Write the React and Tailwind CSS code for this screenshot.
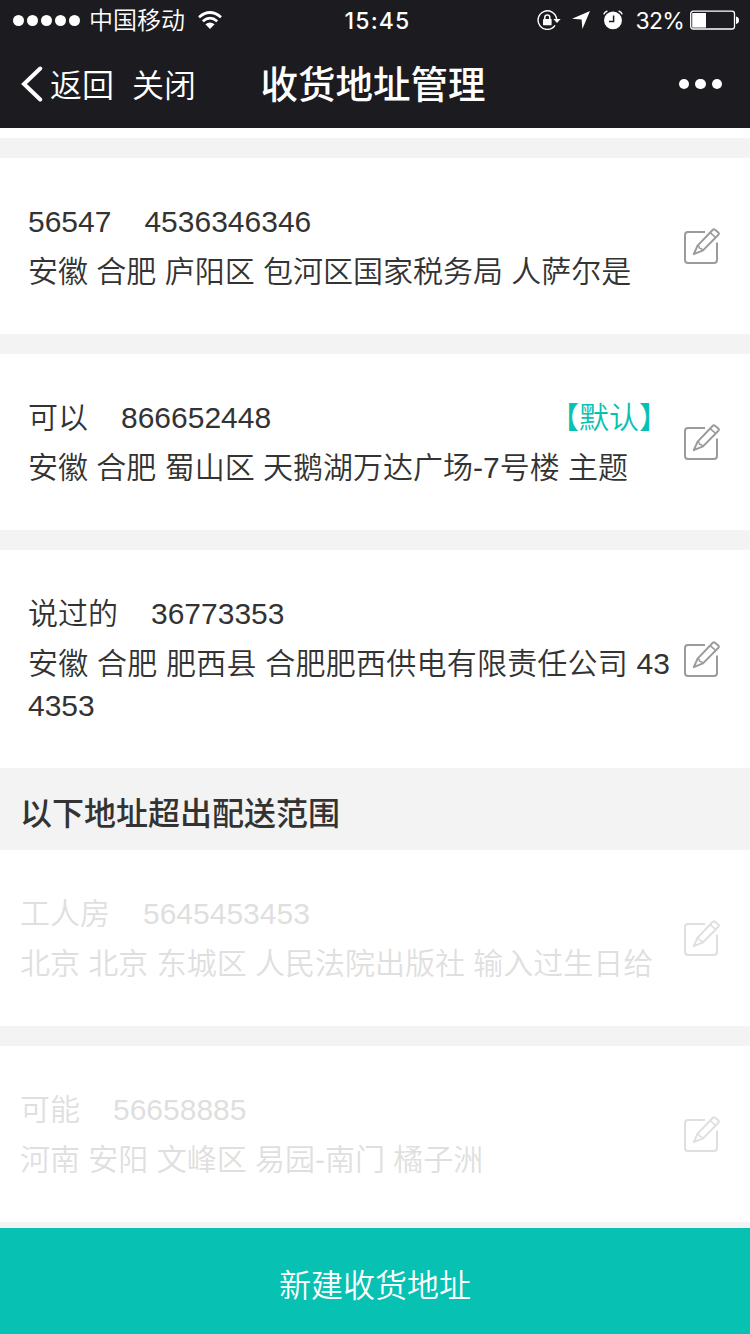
const reachable = [
  { name: '56547', phone: '4536346346', address: '安徽 合肥 庐阳区 包河区国家税务局 人萨尔是' },
  { name: '可以', phone: '866652448', address: '安徽 合肥 蜀山区 天鹅湖万达广场-7号楼 主题', isDefault: true },
  { name: '说过的', phone: '36773353', address: '安徽 合肥 肥西县 合肥肥西供电有限责任公司 434353' },
]

const outOfRange = [
  { name: '工人房', phone: '5645453453', address: '北京 北京 东城区 人民法院出版社 输入过生日给' },
  { name: '可能', phone: '56658885', address: '河南 安阳 文峰区 易园-南门 橘子洲' },
]

function EditIcon({ className }) {
  return (
    <svg
      viewBox="0 0 36 36"
      className={`w-9 h-9 shrink-0 ${className}`}
      fill="none"
      stroke="currentColor"
      strokeWidth="2"
      strokeLinejoin="round"
    >
      <path d="M21 4H4Q1 4 1 7V32Q1 35 4 35H30Q33 35 33 32V14.5" />
      <path d="M9.8 26.2L13.6 17.6L28.8 1.8Q29.8 .8 31 1.7L34.3 4.5Q35.4 5.5 34.4 6.7L19 22.4Z" />
      <path d="M13.6 17.6Q15.2 18 15.6 20.2Q18 20.4 19 22.4M26.2 4.6L31.6 9.4" strokeWidth="1.5" />
    </svg>
  )
}

function StatusBar() {
  return (
    <div className="h-10 flex items-center justify-between pl-[13px] pr-[11px]">
      <div className="flex items-center flex-1">
        <div className="flex gap-[3px] mr-[9px]">
          {[0, 1, 2, 3, 4].map(i => (
            <span key={i} className="w-[11px] h-[11px] rounded-full bg-white" />
          ))}
        </div>
        <span className="pt-[2px] text-[24px] leading-10 font-[350]">中国移动</span>
        <svg viewBox="0 0 24 18" className="w-6 h-[18px] ml-[13px]" fill="none" stroke="white" strokeWidth="2.7">
          <path d="M1 6.2Q12 -3.2 23 6.2" />
          <path d="M4.8 10.2Q12 4 19.2 10.2" />
          <path d="M12 18L7.4 13.3Q12 9.6 16.6 13.3Z" fill="white" stroke="none" />
        </svg>
      </div>
      <span className="pl-[3px] pt-[2px] font-['Inter'] text-[23px] leading-10 font-medium tracking-[1.2px]">15:45</span>
      <div className="flex items-center justify-end flex-1">
        <svg viewBox="0 0 24 20" className="w-6 h-5 mr-[11px]" fill="none" stroke="white" strokeWidth="1.4">
          <path d="M19.6 9A9.3 9.3 0 1 0 18 15.4" />
          <path d="M16.4 9H23.6L20 13Z" fill="white" stroke="none" />
          <rect x="6" y="9" width="8.6" height="6.2" rx=".6" fill="white" stroke="none" />
          <path d="M7.8 9V7.2Q7.8 5 10.3 5Q12.8 5 12.8 7.2V9" strokeWidth="1.5" />
        </svg>
        <svg viewBox="0 0 18 18" className="w-[18px] h-[18px] mr-[13px]" fill="white">
          <path d="M18 0L10.4 18L9.6 8.4L0 7.8Z" />
        </svg>
        <svg viewBox="0 0 20 20" className="w-5 h-5 mr-[13px]" fill="none">
          <circle cx="10" cy="10.4" r="8.9" fill="white" />
          <path d="M10.6 5.6V11.4H6" stroke="#1c1b20" strokeWidth="1.5" />
          <path d="M.8 4.4Q1.6 1.8 4.4 1M19.2 4.4Q18.4 1.8 15.6 1" stroke="white" strokeWidth="1.5" />
        </svg>
        <span className="pt-[2px] font-['Inter'] text-[23px] leading-10 tracking-[-0.8px] mr-[6px]">32%</span>
        <svg viewBox="0 0 49 20" className="w-[49px] h-5" fill="none">
          <rect x=".7" y="1.2" width="43.8" height="17.8" rx="2.5" stroke="white" strokeWidth="1.3" />
          <rect x="2.2" y="3" width="13.8" height="14.6" fill="white" />
          <path d="M46 6.5Q49 7 49 10.2Q49 13.4 46 14Z" fill="white" />
        </svg>
      </div>
    </div>
  )
}

function NavBar() {
  return (
    <div className="h-[88px] flex items-center">
      <div className="flex items-center flex-1 pl-[21px] text-[32px] font-[350]">
        <svg viewBox="0 0 22 36" className="w-[22px] h-9 mr-[7px]" fill="none" stroke="white" strokeWidth="4" strokeLinecap="round">
          <path d="M19.2 2.5L3 18L19.2 33.5" />
        </svg>
        <span className="pt-[3px]">返回</span>
        <span className="pt-[3px] ml-[18px]">关闭</span>
      </div>
      <h1 className="pt-[3px] pl-[3px] text-[37.5px] font-medium">收货地址管理</h1>
      <div className="flex flex-1 justify-end gap-[6px] pr-7">
        {[0, 1, 2].map(i => (
          <span key={i} className="w-[10.5px] h-[10.5px] rounded-full bg-white" />
        ))}
      </div>
    </div>
  )
}

function AddressCard({ item, disabled }) {
  return (
    <li
      className={
        disabled
          ? 'flex items-center bg-white pl-5 pr-[30px] h-[176px] text-[#dfdfe0]'
          : 'flex items-center bg-white pl-7 pr-[30px] py-[42px] text-[#333]'
      }
    >
      <div className="flex-1 mr-[14px] pt-px -mb-px text-[30px] leading-[42px] font-[350]">
        <div className="flex mb-2">
          <span>{item.name}</span>
          <span className="ml-[33px]">{item.phone}</span>
          {item.isDefault && <span className="ml-auto mr-px text-[#07c1b2]">【默认】</span>}
        </div>
        <p className="break-all text-justify">{item.address}</p>
      </div>
      <EditIcon className={disabled ? 'text-[#dfdfdf]' : 'text-[#9b9b9b]'} />
    </li>
  )
}

export default function App() {
  return (
    <div className="w-[750px] h-[1334px] overflow-hidden flex flex-col bg-[#f3f3f3] font-['Liberation_Sans','Noto_Sans_CJK_SC',sans-serif]">
      <header className="h-32 shrink-0 bg-[#1c1b20] text-white">
        <StatusBar />
        <NavBar />
      </header>

      <main className="flex-1 overflow-hidden">
        <div className="h-[10px] mb-5 bg-white" />
        <ul className="flex flex-col gap-5">
          {reachable.map(item => (
            <AddressCard key={item.phone} item={item} />
          ))}
        </ul>
        <h2 className="h-[82px] pl-5 pt-[10px] flex items-center text-[32px] font-medium text-[#333]">以下地址超出配送范围</h2>
        <ul className="flex flex-col gap-5">
          {outOfRange.map(item => (
            <AddressCard key={item.phone} item={item} disabled />
          ))}
        </ul>
      </main>

      <button className="h-[106px] shrink-0 pt-[9px] bg-[#07c1b2] text-white text-[32px] font-[350]">新建收货地址</button>
    </div>
  )
}
